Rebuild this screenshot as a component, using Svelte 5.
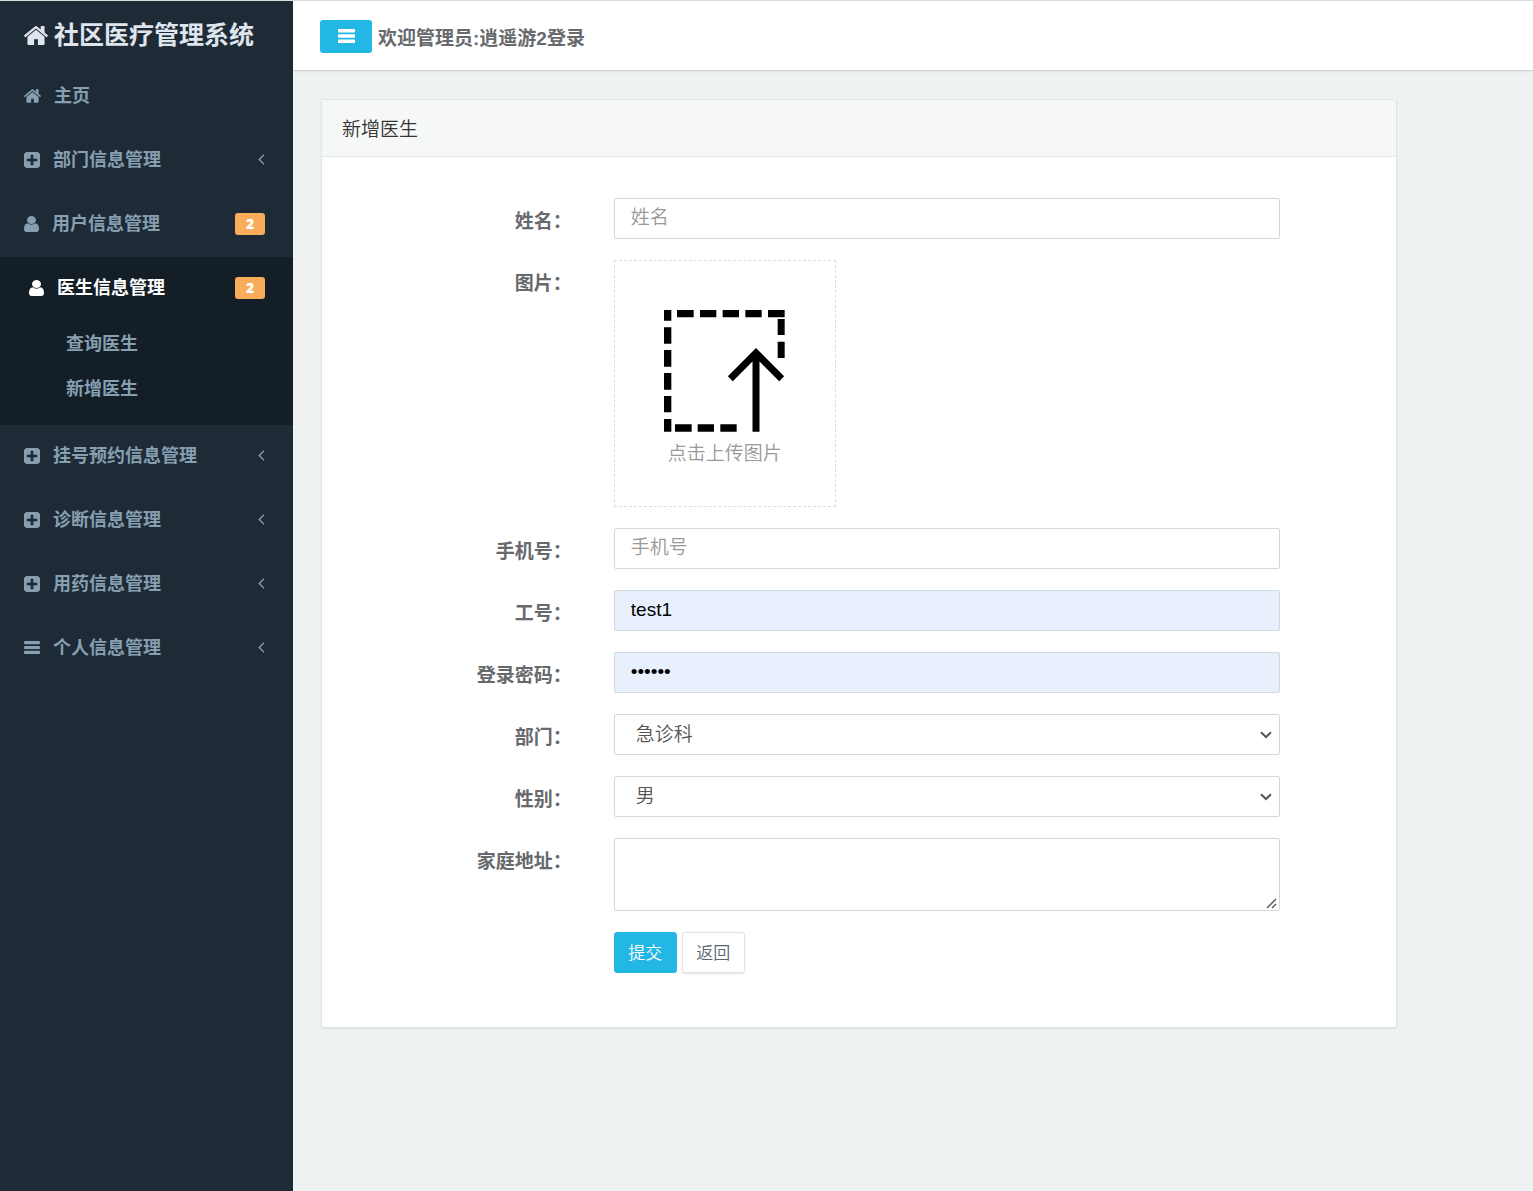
<script>
	const menu = [
		{ label: '主页', icon: 'home' },
		{ label: '部门信息管理', icon: 'plus', arrow: true },
		{ label: '用户信息管理', icon: 'user', badge: 2 },
		{ label: '医生信息管理', icon: 'user', badge: 2, active: true, children: ['查询医生', '新增医生'] },
		{ label: '挂号预约信息管理', icon: 'plus', arrow: true },
		{ label: '诊断信息管理', icon: 'plus', arrow: true },
		{ label: '用药信息管理', icon: 'plus', arrow: true },
		{ label: '个人信息管理', icon: 'bars', arrow: true }
	];

	const departments = ['急诊科', '内科', '外科'];
	const genders = ['男', '女'];

	let name = $state('');
	let phone = $state('');
	let jobNo = $state('test1');
	let password = $state('123456');
	let department = $state('急诊科');
	let gender = $state('男');
	let address = $state('');
	let collapsed = $state(false);

	function handleSubmit(e) {
		e.preventDefault();
	}
</script>

{#snippet icon(type)}
	{#if type === 'home'}
		<svg class="icon home" viewBox="89 253 1614 1283" aria-hidden="true">
			<path d="M1472 992v480q0 26-19 45t-45 19h-384v-384h-256v384h-384q-26 0-45-19t-19-45v-480q0-1 .5-3t.5-3l575-474 575 474q1 2 1 6zm223-69l-62 74q-8 9-21 11h-3q-13 0-21-7l-692-577-692 577q-12 8-24 7-13-2-21-11l-62-74q-8-10-7-23.5t11-21.5l719-599q32-26 76-26t76 26l244 204v-195q0-14 9-23t23-9h192q14 0 23 9t9 23v408l219 182q10 8 11 21.5t-7 23.5z" />
		</svg>
	{:else if type === 'plus'}
		<svg class="icon plus" viewBox="128 128 1536 1536" aria-hidden="true">
			<path d="M1408 960v-128q0-26-19-45t-45-19h-320v-320q0-26-19-45t-45-19h-128q-26 0-45 19t-19 45v320h-320q-26 0-45 19t-19 45v128q0 26 19 45t45 19h320v320q0 26 19 45t45 19h128q26 0 45-19t19-45v-320h320q26 0 45-19t19-45zm256-544v960q0 119-84.5 203.5t-203.5 84.5h-960q-119 0-203.5-84.5t-84.5-203.5v-960q0-119 84.5-203.5t203.5-84.5h960q119 0 203.5 84.5t84.5 203.5z" />
		</svg>
	{:else if type === 'user'}
		<svg class="icon user" viewBox="256 128 1280 1536" preserveAspectRatio="none" aria-hidden="true">
			<path d="M1536 1399q0 109-62.5 187t-150.5 78h-854q-88 0-150.5-78t-62.5-187q0-85 8.5-160.5t31.5-152 58.5-131 94-89 134.5-34.5q131 128 313 128t313-128q76 0 134.5 34.5t94 89 58.5 131 31.5 152 8.5 160.5zm-256-887q0 159-112.5 271.5t-271.5 112.5-271.5-112.5-112.5-271.5 112.5-271.5 271.5-112.5 271.5 112.5 112.5 271.5z" />
		</svg>
	{:else}
		<svg class="icon bars" viewBox="0 0 17 14" aria-hidden="true">
			<rect width="17" height="3.4" rx="0.6" />
			<rect y="5.3" width="17" height="3.4" rx="0.6" />
			<rect y="10.6" width="17" height="3.4" rx="0.6" />
		</svg>
	{/if}
{/snippet}

<div class="app">
	{#if !collapsed}
		<aside class="sidebar">
			<a href="#home" class="brand">
				{@render icon('home')}
				<span>社区医疗管理系统</span>
			</a>

			<nav>
				<ul class="menu">
					{#each menu as item}
						<li class:active={item.active}>
							<a href="#menu" class="menu-link">
								{@render icon(item.icon)}
								<span>{item.label}</span>
								{#if item.badge}
									<b class="badge">{item.badge}</b>
								{/if}
								{#if item.arrow}
									<svg class="arrow" viewBox="0 0 7 11" aria-hidden="true">
										<path d="M6 0.8L1.2 5.5L6 10.2" />
									</svg>
								{/if}
							</a>
							{#if item.children}
								<ul class="submenu">
									{#each item.children as child}
										<li><a href="#sub">{child}</a></li>
									{/each}
								</ul>
							{/if}
						</li>
					{/each}
				</ul>
			</nav>
		</aside>
	{/if}

	<div class="main">
		<header class="topbar">
			<button type="button" class="toggle" aria-label="菜单" onclick={() => (collapsed = !collapsed)}>
				{@render icon('bars')}
			</button>
			<span class="welcome">欢迎管理员:逍遥游2登录</span>
		</header>

		<main class="content">
			<section class="panel">
				<h1 class="panel-title">新增医生</h1>

				<form class="form" onsubmit={handleSubmit} autocomplete="off">
					<label for="name">姓名：</label>
					<input id="name" type="text" placeholder="姓名" bind:value={name} />

					<label for="photo">图片：</label>
					<label class="upload">
						<input id="photo" type="file" accept="image/*" />
						<svg viewBox="0 0 363 366" aria-hidden="true">
							<!-- left side -->
							<path d="M0 0h22v32H0zM0 52h22v49H0zM0 120h22v50H0zM0 189h22v50H0zM0 258h22v49H0zM0 327h22v38H0z" />
							<!-- top, right, bottom -->
							<path d="M39 0h50v22H39zM108 0h49v22h-49zM176 0h49v22h-49zM244 0h49v22h-49zM312 0h50v22h-50z" />
							<path d="M341 27h21v48h-21zM341 95h21v49h-21z" />
							<path d="M33 343h50v22H33zM101 343h49v22h-49zM169 343h49v22h-49z" />
							<path class="tip" d="M199 206L276 129L353 206M276 129V365" />
						</svg>
						<span>点击上传图片</span>
					</label>

					<label for="phone">手机号：</label>
					<input id="phone" type="text" placeholder="手机号" bind:value={phone} />

					<label for="jobNo">工号：</label>
					<input id="jobNo" class="filled" type="text" bind:value={jobNo} />

					<label for="password">登录密码：</label>
					<input id="password" class="filled" type="password" bind:value={password} />

					<label for="department">部门：</label>
					<select id="department" bind:value={department}>
						{#each departments as d}
							<option value={d}>{d}</option>
						{/each}
					</select>

					<label for="gender">性别：</label>
					<select id="gender" bind:value={gender}>
						{#each genders as g}
							<option value={g}>{g}</option>
						{/each}
					</select>

					<label for="address">家庭地址：</label>
					<textarea id="address" bind:value={address}></textarea>

					<div class="actions">
						<button type="submit" class="btn primary">提交</button>
						<button type="button" class="btn">返回</button>
					</div>
				</form>
			</section>
		</main>
	</div>
</div>

<style>
:global(body) {
	margin: 0;
	background: #edf1f2;
}

.app {
	display: flex;
	min-height: 100vh;
	box-sizing: border-box;
	border-top: 1px solid #d9dcdc;
	background: #eef2f3;
	font-family: "Liberation Sans", "Noto Sans CJK SC", sans-serif;
	font-size: 19px;
	color: #67696c;
}

a {
	color: inherit;
	text-decoration: none;
}

ul {
	list-style: none;
	margin: 0;
	padding: 0;
}

/* ICONS */
.icon {
	flex: none;
	fill: currentColor;
}
.home {
	width: 17px;
	height: 14px;
}
.plus {
	width: 16px;
	height: 16px;
}
.user {
	width: 15px;
	height: 16px;
}
.bars {
	width: 16px;
	height: 13px;
}

/* SIDEBAR */
.sidebar {
	flex: none;
	width: 293px;
	background: #1e2b36;
	color: #869fb1;
	font-size: 18px;
	font-weight: bold;
}
.brand {
	display: flex;
	align-items: center;
	gap: 6px;
	height: 60px;
	padding: 4px 24px 0;
	color: #dfe4ed;
	font-size: 25px;
	line-height: 36px;
}
.brand .home {
	width: 24px;
	height: 19px;
}
.menu-link {
	display: flex;
	align-items: center;
	gap: 13px;
	height: 64px;
	box-sizing: border-box;
	padding: 0 28px 3px 24px;
	line-height: 26px;
}
.badge {
	width: 30px;
	margin-left: auto;
	border-radius: 3px;
	background: #f9ac59;
	color: #fff;
	font-family: "Open Sans", sans-serif;
	font-size: 14px;
	line-height: 22px;
	text-align: center;
}
.arrow {
	width: 7px;
	height: 11px;
	margin-left: auto;
	fill: none;
	stroke: currentColor;
	stroke-width: 1.3;
}
.active {
	background: #141e26;
}
.active .menu-link {
	padding-left: 29px;
	color: #fff;
}
.submenu {
	padding: 1px 0 13px;
}
.submenu a {
	display: block;
	padding-left: 66px;
	line-height: 45px;
}

/* TOPBAR */
.main {
	flex: 1;
	min-width: 0;
}
.topbar {
	display: flex;
	align-items: center;
	gap: 6px;
	height: 67px;
	padding: 2px 27px 0;
	background: #fff;
	border-bottom: 1px solid #cdd2d3;
	box-shadow: 0 1px 2px rgba(0, 0, 0, 0.06);
}
.toggle {
	display: flex;
	align-items: center;
	justify-content: center;
	width: 52px;
	height: 33px;
	padding: 0 0 1px;
	border: none;
	border-radius: 3px;
	background: #23b7e5;
	color: #fff;
	cursor: pointer;
}
.toggle .bars {
	width: 17px;
	height: 14px;
}
.welcome {
	font-weight: bold;
}

/* PANEL */
.content {
	padding: 28px 136px 28px 28px;
}
.panel {
	background: #fff;
	border: 1px solid #dee5e7;
	border-radius: 3px;
	box-shadow: 0 1px 2px rgba(0, 0, 0, 0.06);
}
.panel-title {
	margin: 0;
	padding: 4px 20px 0;
	border-bottom: 1px solid #e1e8e9;
	background: #f6f8f8;
	color: #333;
	font-size: 19px;
	font-weight: 350;
	line-height: 52px;
}

/* FORM */
.form {
	display: grid;
	grid-template-columns: 3fr 8fr;
	gap: 21px 42px;
	align-items: start;
	padding: 41px 116px 54px 0;
}
.form > label:not(.upload) {
	padding-top: 10px;
	font-weight: bold;
	line-height: 28px;
	text-align: right;
}
.form > input,
select,
textarea {
	width: 100%;
	height: 41px;
	box-sizing: border-box;
	margin: 0;
	padding: 0 16px 1px;
	border: 1px solid #cfdadd;
	border-radius: 2px;
	outline: none;
	background: #fff;
	color: #555;
	font-family: inherit;
	font-size: 19px;
	font-weight: 350;
}
.form > select {
	appearance: none;
	padding: 0 32px 0 21px;
	background: #fff url("data:image/svg+xml,%3Csvg xmlns='http://www.w3.org/2000/svg' width='12' height='8'%3E%3Cpath d='M1 1.2L6 6L11 1.2' fill='none' stroke='%23555' stroke-width='2'/%3E%3C/svg%3E") no-repeat right 7px center;
}
.form > input::placeholder {
	color: #999;
}
.form > .filled {
	background: #e8f0fe;
	color: #000;
}
.form > textarea {
	height: 73px;
	padding: 8px 16px;
	resize: vertical;
}
.form > textarea::-webkit-resizer {
	background: url("data:image/svg+xml,%3Csvg xmlns='http://www.w3.org/2000/svg' width='15' height='15'%3E%3Cpath d='M3 13L12 4M8 13L12 9' fill='none' stroke='%23555' stroke-width='1.4'/%3E%3C/svg%3E") no-repeat right bottom;
}
.upload {
	display: flex;
	flex-direction: column;
	align-items: center;
	width: 222px;
	height: 247px;
	box-sizing: border-box;
	padding-top: 49px;
	border: 1px dashed #ddd;
	color: #999;
	font-weight: 350;
	line-height: 28px;
	cursor: pointer;
}
.upload input {
	display: none;
}
.upload svg {
	width: 121px;
	height: 122px;
	margin-bottom: 8px;
}
.tip {
	fill: none;
	stroke: #000;
	stroke-width: 21;
}
.actions {
	display: flex;
	grid-column: 2;
	gap: 5px;
}
.btn {
	width: 63px;
	height: 41px;
	padding: 0 0 3px;
	border: 1px solid #dee5e7;
	border-radius: 3px;
	background: #fff;
	box-shadow: 0 1px 2px rgba(90, 90, 90, 0.15);
	color: #58666e;
	font-family: inherit;
	font-size: 17px;
	font-weight: 350;
	cursor: pointer;
}
.primary {
	border-color: #23b7e5;
	background: #23b7e5;
	box-shadow: none;
	color: #fff;
}
</style>
